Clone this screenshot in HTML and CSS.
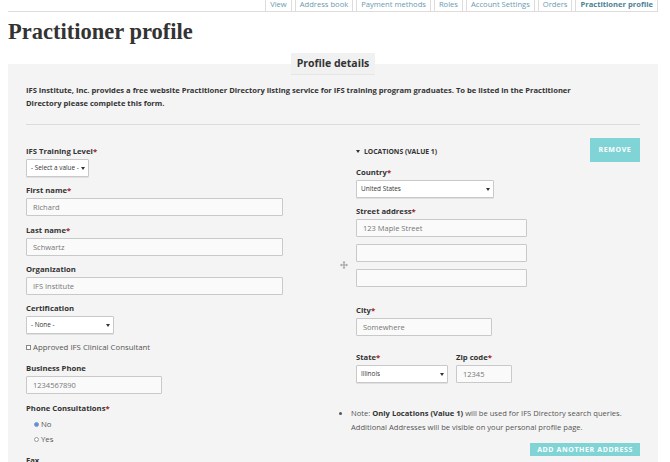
FILE: index.html
```html
<!DOCTYPE html>
<html>
<head>
<meta charset="utf-8">
<link rel="stylesheet" href="styles.css">
</head>
<body>
<nav class="tabs">
  <a class="tab">View</a>
  <a class="tab">Address book</a>
  <a class="tab">Payment methods</a>
  <a class="tab">Roles</a>
  <a class="tab">Account Settings</a>
  <a class="tab">Orders</a>
  <a class="tab active">Practitioner profile</a>
</nav>
<h1 class="title">Practitioner profile</h1>
<section class="panel">
  <div class="legend">Profile details</div>
  <p class="intro">IFS Institute, Inc. provides a free website Practitioner Directory listing service for IFS training program graduates. To be listed in the Practitioner Directory please complete this form.</p>
  <hr class="rule">
  <div class="cols">
    <div class="left">
      <div class="field">
        <label class="lbl">IFS Training Level<span class="req">*</span></label>
        <div class="select w-train">- Select a value -<span class="caret"></span></div>
      </div>
      <div class="field">
        <label class="lbl">First name<span class="req">*</span></label>
        <div class="input w-wide">Richard</div>
      </div>
      <div class="field">
        <label class="lbl">Last name<span class="req">*</span></label>
        <div class="input w-wide">Schwartz</div>
      </div>
      <div class="field">
        <label class="lbl">Organization</label>
        <div class="input w-wide">IFS Institute</div>
      </div>
      <div class="field">
        <label class="lbl">Certification</label>
        <div class="select w-cert">- None -<span class="caret"></span></div>
      </div>
      <div class="check"><span class="box"></span>Approved IFS Clinical Consultant</div>
      <div class="field">
        <label class="lbl">Business Phone</label>
        <div class="input w-phone">1234567890</div>
      </div>
      <div class="field">
        <label class="lbl">Phone Consultations<span class="req">*</span></label>
        <div class="radios">
          <div class="radio"><span class="dot on"></span>No</div>
          <div class="radio"><span class="dot"></span>Yes</div>
        </div>
      </div>
      <div class="field">
        <label class="lbl">Fax</label>
      </div>
    </div>
    <div class="right">
      <div class="loc-row">
        <div class="handle">
          <svg width="8" height="8" viewBox="0 0 8 8"><path d="M4 0 L5.5 1.6 H4.5 V3.5 H6.4 V2.5 L8 4 L6.4 5.5 V4.5 H4.5 V6.4 H5.5 L4 8 L2.5 6.4 H3.5 V4.5 H1.6 V5.5 L0 4 L1.6 2.5 V3.5 H3.5 V1.6 H2.5 Z" fill="#9a9a9a"/></svg>
        </div>
        <div class="loc-body">
          <div class="loc-head">
            <span class="loc-title"><span class="tri"></span>LOCATIONS (VALUE 1)</span>
            <span class="btn btn-remove">REMOVE</span>
          </div>
          <div class="field">
            <label class="lbl">Country<span class="req">*</span></label>
            <div class="select w-country">United States<span class="caret"></span></div>
          </div>
          <div class="field">
            <label class="lbl">Street address<span class="req">*</span></label>
            <div class="input w-street">123 Maple Street</div>
            <div class="input w-street gap"></div>
            <div class="input w-street gap"></div>
          </div>
          <div class="field city">
            <label class="lbl">City<span class="req">*</span></label>
            <div class="input w-city">Somewhere</div>
          </div>
          <div class="pair">
            <div class="field">
              <label class="lbl">State<span class="req">*</span></label>
              <div class="select w-state">Illinois<span class="caret"></span></div>
            </div>
            <div class="field">
              <label class="lbl">Zip code<span class="req">*</span></label>
              <div class="input w-zip">12345</div>
            </div>
          </div>
        </div>
      </div>
      <ul class="note">
        <li>Note: <b>Only Locations (Value 1)</b> will be used for IFS Directory search queries. Additional Addresses will be visible on your personal profile page.</li>
      </ul>
      <div class="add-row"><span class="btn btn-add">ADD ANOTHER ADDRESS</span></div>
    </div>
  </div>
</section>
</body>
</html>
```
FILE: styles.css
```css
* { box-sizing: border-box; }
html, body { margin: 0; padding: 0; }
body {
  font-family: "Open Sans", "DejaVu Sans", sans-serif;
  color: #333;
  background: #fff;
  width: 670px;
  height: 462px;
  overflow: hidden;
}
.tabs {
  display: flex;
  justify-content: flex-end;
  gap: 3px;
  margin: 0 12px 0 8px;
  border-bottom: 1px solid #ddd;
  height: 12px;
  overflow: hidden;
  align-items: flex-end;
}
.tab {
  display: block;
  font-size: 7.6px;
  line-height: 10px;
  padding: 0 4px 2px;
  color: #6a9aae;
  border-left: 1px solid #ddd;
  border-right: 1px solid #ddd;
  white-space: nowrap;
}
.tab.active { font-weight: 700; color: #4c8194; }
.title {
  font-family: "Liberation Serif", "Times New Roman", serif;
  font-weight: 700;
  font-size: 22.5px;
  line-height: 28px;
  margin: 6px 0 0 8px;
  color: #333;
}
.panel {
  margin: 18px 12px 0 8px;
  background: #f4f4f4;
  padding: 0 18px 20px;
  display: flex;
  flex-direction: column;
}
.legend {
  align-self: center;
  margin-top: -11px;
  background: #f1f1f1;
  font-weight: 700;
  font-size: 10.5px;
  line-height: 21px;
  padding: 0 6px;
  border-bottom: 1px solid #e6e6e6;
  color: #333;
}
.intro {
  font-size: 7.6px;
  font-weight: 700;
  line-height: 13px;
  margin: 9px 0 0;
  max-width: 560px;
}
.rule {
  border: 0;
  border-top: 1px solid #dcdcdc;
  margin: 14px 0 0;
}
.cols {
  display: grid;
  grid-template-columns: 314px 1fr;
  margin-top: 20px;
}
.field { margin-bottom: 7.25px; }
.lbl {
  display: block;
  font-size: 7.7px;
  font-weight: 700;
  line-height: 12px;
  margin-bottom: 2px;
  color: #333;
}
.req { color: #9b2020; }
.input, .select {
  height: 18px;
  border: 1px solid #c9c9c9;
  font-size: 7.5px;
  line-height: 16px;
  padding: 0 6px;
  color: #777;
  background: #fafafa;
  border-radius: 1px;
  white-space: nowrap;
}
.select {
  position: relative;
  background: #fff;
  color: #333;
  font-size: 6.4px;
  padding: 0 4px 0 4px;
  box-shadow: 0 1px 0 #e0e0e0;
}
.caret {
  position: absolute;
  right: 3px;
  top: 7px;
  border-left: 2px solid transparent;
  border-right: 2px solid transparent;
  border-top: 3px solid #333;
}
.w-train { width: 63px; }
.w-wide { width: 257px; }
.w-cert { width: 88px; }
.w-phone { width: 136px; }
.w-country { width: 138px; }
.w-street { width: 171px; }
.w-city { width: 136px; }
.w-state { width: 92px; }
.w-zip { width: 56px; }
.gap { margin-top: 7px; }
.check {
  display: flex;
  align-items: center;
  font-size: 7.8px;
  line-height: 12px;
  color: #555;
  margin: 2px 0 9px;
}
.box {
  width: 5px; height: 5px;
  border: 1px solid #888;
  background: #fff;
  margin-right: 2px;
}
.radios { padding-top: 1px; }
.radio {
  display: flex;
  align-items: center;
  font-size: 7.8px;
  line-height: 15px;
  color: #555;
  padding-left: 8px;
}
.dot {
  width: 5px; height: 5px;
  border-radius: 50%;
  border: 1px solid #999;
  background: #fff;
  margin-right: 2px;
}
.dot.on { background: #5b8fd6; border-color: #7a9fcf; }
.right { display: flex; flex-direction: column; }
.loc-row { display: flex; align-items: center; }
.handle { width: 16px; display: flex; justify-content: center; padding-right: 8px; margin-bottom: 6px; }
.loc-body { flex: 1; }
.loc-head {
  display: flex;
  justify-content: space-between;
  align-items: center;
  margin-top: -7px;
  margin-bottom: 4px;
}
.loc-title {
  font-size: 6.8px;
  font-weight: 700;
  display: flex;
  align-items: center;
  color: #333;
  padding-top: 2px;
}
.tri {
  border-left: 2px solid transparent;
  border-right: 2px solid transparent;
  border-top: 3px solid #333;
  margin-right: 4px;
}
.btn {
  background: #80d4d6;
  color: #fff;
  font-weight: 700;
  font-size: 7px;
  letter-spacing: 0.6px;
  text-align: center;
}
.btn-remove { width: 50px; line-height: 24px; }
.city { margin-top: 17px; }
.pair { display: flex; gap: 8px; margin-top: 15px; }
.note {
  margin: 15px 0 0;
  padding-left: 11px;
  font-size: 7.6px;
  line-height: 14px;
  color: #555;
}
.note b { color: #333; }
.add-row { display: flex; justify-content: flex-end; margin-top: 9px; }
.btn-add { width: 110px; line-height: 13px; }
```
